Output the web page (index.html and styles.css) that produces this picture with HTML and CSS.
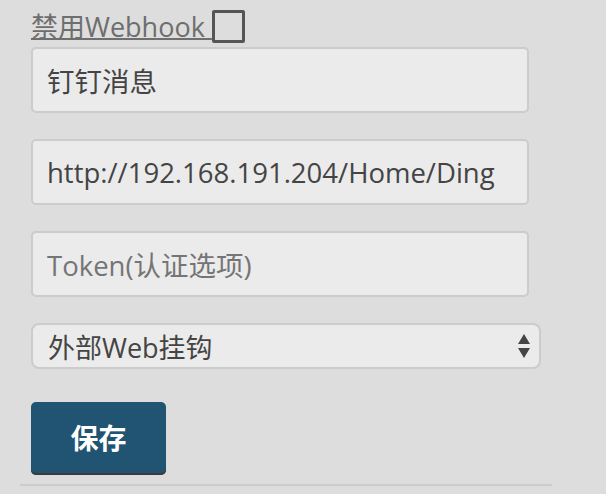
FILE: index.html
```html
<!DOCTYPE html>
<html lang="zh">
<head>
<meta charset="utf-8">
<link rel="stylesheet" href="styles.css">
</head>
<body>
<div class="page">
  <form class="form">
    <label class="toggle">
      <span class="toggle-text">禁用Webhook&nbsp;</span>
      <span class="box"></span>
    </label>
    <div class="field">钉钉消息</div>
    <div class="field">http://192.168.191.204/Home/Ding</div>
    <div class="field placeholder">Token(认证选项)</div>
    <div class="select">
      <span>外部Web挂钩</span>
      <svg class="arrows" width="14" height="26" viewBox="0 0 14 26"><path d="M7 1 L13 11 L1 11 Z" fill="#444"/><path d="M1 15 L13 15 L7 25 Z" fill="#444"/></svg>
    </div>
    <button type="button" class="save">保存</button>
  </form>
  <div class="rule"></div>
</div>
</body>
</html>
```
FILE: styles.css
```css
html, body {
  margin: 0;
  padding: 0;
  background: #dddddd;
}
body {
  font-family: "Open Sans", "Noto Sans CJK SC", sans-serif;
  width: 606px;
  height: 494px;
  overflow: hidden;
}
.page {
  padding-top: 10px;
}
.form {
  margin-left: 31px;
  display: flex;
  flex-direction: column;
  align-items: flex-start;
}
.toggle {
  display: flex;
  align-items: flex-start;
  height: 33px;
  margin-bottom: 4px;
}
.toggle-text {
  font-size: 27px;
  line-height: 33px;
  margin-top: 0;
  color: #6e6e6e;
  text-decoration: underline;
  text-underline-offset: 1px;
  text-decoration-thickness: 2px;
}
.box {
  width: 27px;
  height: 27px;
  border: 3px solid #555;
  border-radius: 2px;
  margin-left: 0;
}
.field {
  box-sizing: border-box;
  width: 498px;
  height: 66px;
  border: 2px solid #cccccc;
  border-radius: 5px;
  background: #ebebeb;
  padding: 0 14px;
  display: flex;
  align-items: center;
  font-size: 27.5px;
  color: #444;
  margin-bottom: 26px;
}
.placeholder {
  color: #757575;
}
.select {
  box-sizing: border-box;
  width: 510px;
  height: 46px;
  border: 2px solid #cccccc;
  border-radius: 8px;
  background: #ebebeb;
  padding: 0 8px 0 15px;
  display: flex;
  align-items: center;
  justify-content: space-between;
  font-size: 27px;
  color: #444;
}
.save {
  margin-top: 33px;
  width: 135px;
  height: 73px;
  border: none;
  border-radius: 5px;
  background: #215372;
  box-shadow: inset 0 -2px 0 #3b3b3b;
  color: #fff;
  font-family: "Open Sans", "Noto Sans CJK SC", sans-serif;
  font-weight: bold;
  font-size: 28px;
  padding: 0 0 3px;
}
.rule {
  margin: 9px 0 0 20px;
  width: 532px;
  height: 2px;
  background: #cccccc;
}
```
